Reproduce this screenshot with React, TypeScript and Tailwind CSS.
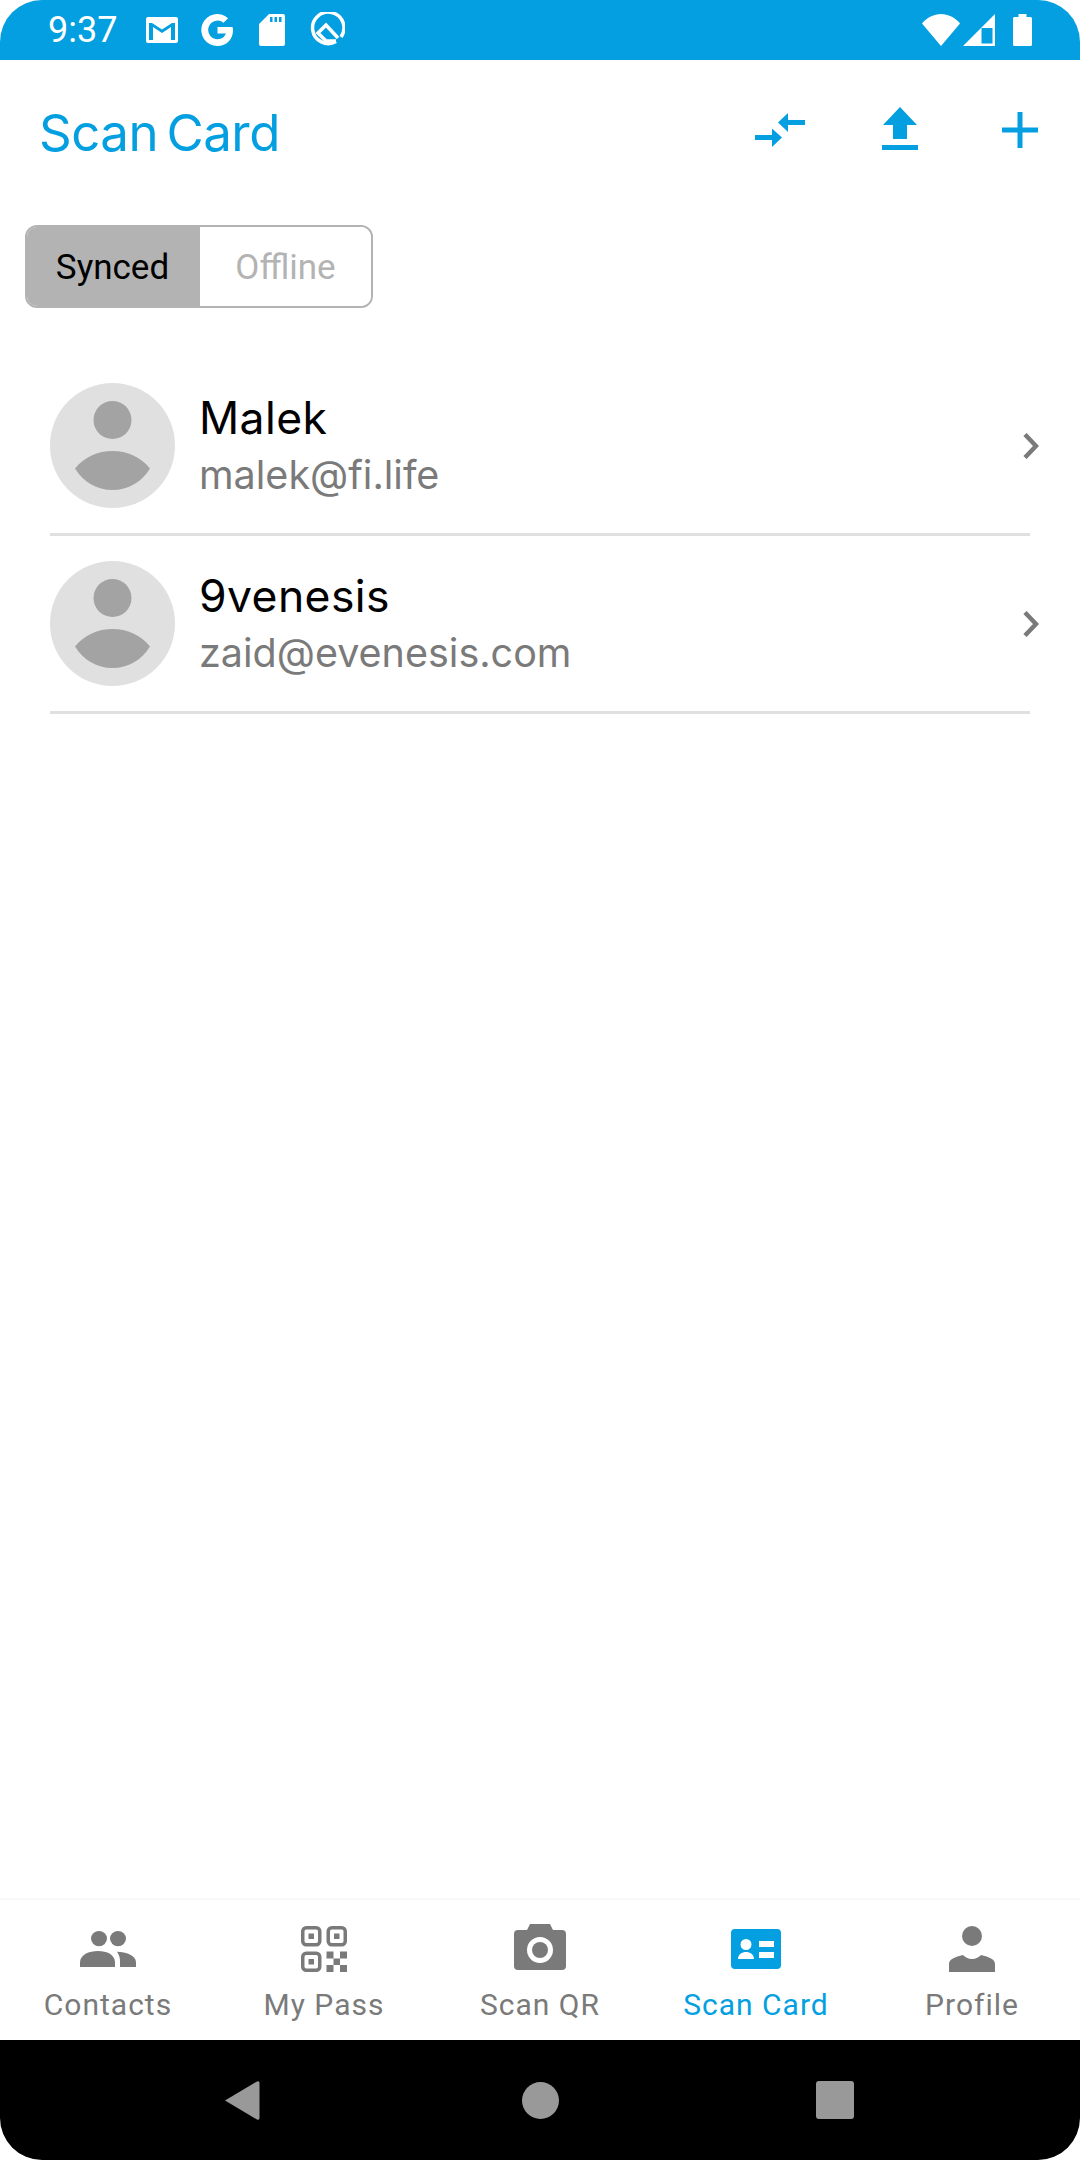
import React from "react";

const BLUE = "#039fe0";
const GRAY = "#7a7a7a";

function Chevron() {
  return (
    <svg width="16" height="26" viewBox="0 0 16 26" className="shrink-0">
      <path d="M2 1.5 L13 13 L2 24.5" fill="none" stroke={GRAY} strokeWidth="4.5" />
    </svg>
  );
}

function Avatar() {
  return (
    <svg width="125" height="125" viewBox="0 0 125 125" className="shrink-0">
      <circle cx="62.5" cy="62.5" r="62.5" fill="#e0e0e0" />
      <circle cx="62.5" cy="37" r="19" fill="#a3a3a3" />
      <path d="M25 85.5 C34 74 48 68 62.5 68 C77 68 91 74 100 85.5 C92 99 78 107 62.5 107 C47 107 33 99 25 85.5 Z" fill="#a3a3a3" />
    </svg>
  );
}

function Row({ name, email }: { name: string; email: string }) {
  return (
    <div className="h-[178px] flex flex-col">
      <div className="flex items-center h-[175px] pl-[50px] pr-[41px] pt-[25px] pb-[25px] shrink-0">
        <Avatar />
        <div className="ml-[24px] flex-1 flex flex-col font-['Inter',sans-serif]">
          <div className="text-[44.5px] leading-[50px] tracking-[0.4px] text-black">{name}</div>
          <div className="text-[39.5px] leading-[46px] text-[#7a7a7a] mt-[9px]">{email}</div>
        </div>
        <Chevron />
      </div>
      <div className="h-[3px] bg-[#e0e0e0] ml-[50px] mr-[50px] shrink-0" />
    </div>
  );
}

function Tab({ label, active, children }: { label: string; active?: boolean; children: React.ReactNode }) {
  return (
    <div className="flex-1 flex flex-col items-center">
      <div className="h-[50px] mt-[24px] flex items-center justify-center">{children}</div>
      <div className={"text-[30px] leading-[36px] mt-[13px] tracking-[1px] font-['Roboto',sans-serif] " + (active ? "text-[#039fe0]" : "text-[#7a7a7a]")}>{label}</div>
    </div>
  );
}

export default function App() {
  return (
    <div className="w-[1080px] h-[2160px] bg-white flex flex-col overflow-hidden">
      {/* status bar */}
      <div className="h-[60px] shrink-0 bg-[#039fe0] rounded-t-[42px] flex items-center pl-[48px] pr-[48px] text-white">
        <span className="text-[36px] leading-[60px] font-normal font-['Roboto',sans-serif] w-[67px]">9:37</span>
        {/* gmail */}
        <svg width="32" height="26" viewBox="0 0 32 26" className="ml-[31px]">
          <path fillRule="evenodd" d="M2 0H30a2 2 0 0 1 2 2V24a2 2 0 0 1-2 2H2a2 2 0 0 1-2-2V2a2 2 0 0 1 2-2Z M3 6V23H7V10L16 16L25 10V23H29V6H26L16 12.5L6 6Z" fill="#fff" />
        </svg>
        {/* G */}
        <svg width="32" height="32" viewBox="0 0 32 32" className="ml-[23px]">
          <path d="M31.5 13H16.5V19.5H24.8C23.8 23 20.6 25.2 16.5 25.2A9.3 9.3 0 1 1 22.5 8.8L27.1 4.2A16 16 0 1 0 16.5 32C25.5 32 32 25.5 32 16.3C32 15.1 31.8 14 31.5 13Z" fill="#fff" />
        </svg>
        {/* sd */}
        <svg width="26" height="32" viewBox="0 0 26 32" className="ml-[26px]">
          <path fillRule="evenodd" d="M10 0H24a2 2 0 0 1 2 2V30a2 2 0 0 1-2 2H2a2 2 0 0 1-2-2V10Z M11 3V8H13.5V3Z M15.5 3V8H18V3Z M20 3V8H22.5V3Z" fill="#fff" />
        </svg>
        {/* Q */}
        <svg width="36" height="36" viewBox="0 0 36 36" className="ml-[24px]">
          <path d="M27 29.5A15.7 15.7 0 1 1 32 25" fill="none" stroke="#fff" strokeWidth="3.5" />
          <path d="M29 26L17 13L9 21L17 29H27" fill="none" stroke="#fff" strokeWidth="3.5" />
        </svg>
        <div className="flex-1" />
        {/* wifi */}
        <svg width="38" height="32" viewBox="0 0 38 32">
          <path d="M0 9.5C5 3.5 12 0 19 0C26 0 33 3.5 38 9.5L19 32Z" fill="#fff" />
        </svg>
        {/* signal */}
        <svg width="32" height="32" viewBox="0 0 32 32" className="ml-[3px]">
          <path fillRule="evenodd" d="M32 0V32H0Z M29.5 14H18.5V29.5H29.5Z" fill="#fff" />
        </svg>
        {/* battery */}
        <svg width="19" height="32" viewBox="0 0 19 32" className="ml-[18px]">
          <path d="M5.5 0H13.5V3H17.5a1.5 1.5 0 0 1 1.5 1.5V30.5a1.5 1.5 0 0 1-1.5 1.5H1.5a1.5 1.5 0 0 1-1.5-1.5V4.5A1.5 1.5 0 0 1 1.5 3H5.5Z" fill="#fff" />
        </svg>
      </div>

      {/* header */}
      <div className="h-[143px] shrink-0 flex items-center pl-[39px] pr-[42px] pt-[2px]">
        <div className="flex-1 text-[51px] leading-[60px] font-['Inter',sans-serif] text-[#039fe0] tracking-[-0.5px] [word-spacing:-5.5px]">Scan Card</div>
        <div className="flex items-center mb-[6px]">
          <svg width="50" height="34" viewBox="0 0 50 34">
            <path d="M0 22H17V27H0Z M50 7H33V12H50Z" fill={BLUE} />
            <path d="M17 15.5L27 24.5L17 34Z M33 0L23 9.5L33 19Z" fill={BLUE} />
          </svg>
          <svg width="36" height="43" viewBox="0 0 36 43" className="ml-[77px] mb-[2px]">
            <path d="M18 0L35 18H25V32H11V18H1Z M0 38H36V43H0Z" fill={BLUE} />
          </svg>
          <svg width="36" height="36" viewBox="0 0 36 36" className="ml-[84px]">
            <path d="M15.5 0H20.5V15.5H36V20.5H20.5V36H15.5V20.5H0V15.5H15.5Z" fill={BLUE} />
          </svg>
        </div>
      </div>

      {/* segment */}
      <div className="pl-[25px] pt-[22px] shrink-0">
        <div className="flex w-[348px] h-[83px] border-2 border-[#b3b3b3] rounded-[12px] overflow-hidden font-['Roboto',sans-serif] text-[35px]">
          <div className="w-[173px] bg-[#b3b3b3] text-black flex items-center justify-center pt-[3px] pr-[2px]">Synced</div>
          <div className="flex-1 bg-white text-[#b3b3b3] flex items-center justify-center pt-[3px]">Offline</div>
        </div>
      </div>

      {/* list */}
      <div className="mt-[50px] shrink-0">
        <Row name="Malek" email="malek@fi.life" />
        <Row name="9venesis" email="zaid@evenesis.com" />
      </div>

      <div className="flex-1" />

      {/* tabs */}
      <div className="h-[142px] shrink-0 border-t-2 border-[#f8f8f8] flex bg-white">
        <Tab label="Contacts">
          <svg width="56" height="36" viewBox="0 0 56 38" preserveAspectRatio="none">
            <circle cx="19" cy="8" r="8" fill={GRAY} />
            <circle cx="38" cy="8" r="8" fill={GRAY} />
            <path d="M0 38V33C0 25 9 21 18 21C27 21 35 25 35 33V38Z" fill={GRAY} />
            <path d="M37 22C46 22 56 26 56 33V38H40V32C40 28 39 25 37 22Z" fill={GRAY} />
          </svg>
        </Tab>
        <Tab label="My Pass">
          <svg width="46" height="46" viewBox="0 0 46 46">
            <g fill="none" stroke={GRAY} strokeWidth="3.5">
              <rect x="1.75" y="1.75" width="17" height="17" rx="3.5" />
              <rect x="27.25" y="1.75" width="17" height="17" rx="3.5" />
              <rect x="1.75" y="27.25" width="17" height="17" rx="3.5" />
            </g>
            <g fill={GRAY}>
              <rect x="7.5" y="7.5" width="5.5" height="5.5" />
              <rect x="33" y="7.5" width="5.5" height="5.5" />
              <rect x="7.5" y="33" width="5.5" height="5.5" />
              <rect x="25.5" y="25.5" width="7" height="7" />
              <rect x="39" y="25.5" width="7" height="7" />
              <rect x="32.5" y="32.5" width="6.5" height="6.5" />
              <rect x="25.5" y="39" width="7" height="7" />
              <rect x="39" y="39" width="7" height="7" />
            </g>
          </svg>
        </Tab>
        <Tab label="Scan QR">
          <svg width="52" height="46" viewBox="0 0 52 46" className="mb-[4px]">
            <path fillRule="evenodd" d="M16 0H36L39 6H48a4 4 0 0 1 4 4V42a4 4 0 0 1-4 4H4a4 4 0 0 1-4-4V10a4 4 0 0 1 4-4H13Z M26 13a13 13 0 1 0 0 26a13 13 0 1 0 0-26Z" fill={GRAY} />
            <circle cx="26" cy="26" r="8" fill={GRAY} />
          </svg>
        </Tab>
        <Tab label="Scan Card" active>
          <svg width="50" height="40" viewBox="0 0 50 40">
            <path fillRule="evenodd" d="M4 0H46a4 4 0 0 1 4 4V36a4 4 0 0 1-4 4H4a4 4 0 0 1-4-4V4a4 4 0 0 1 4-4Z M15 10a5.5 5.5 0 1 0 0 11a5.5 5.5 0 1 0 0-11Z M7 30H23C23 25.5 19 23 15 23C11 23 7 25.5 7 30Z M28 12V18H43V12Z M28 23V29H43V23Z" fill={BLUE} />
          </svg>
        </Tab>
        <Tab label="Profile">
          <svg width="46" height="46" viewBox="0 0 46 46">
            <circle cx="23" cy="10" r="10" fill={GRAY} />
            <path d="M0 46V38C0 33 6 31 14 29C16 31 19 33 23 33C27 33 30 31 32 29C40 31 46 33 46 38V46Z" fill={GRAY} />
          </svg>
        </Tab>
      </div>

      {/* nav */}
      <div className="h-[120px] shrink-0 bg-black rounded-b-[42px] flex items-center pl-[224px]">
        <svg width="36" height="41" viewBox="0 0 36 41">
          <path d="M1 20.5L33 1.5Q35.5 0.5 35.5 3V38Q35.5 40.5 33 39.5Z" fill="#999" />
        </svg>
        <div className="w-[37px] h-[37px] rounded-full bg-[#999] ml-[262px]" />
        <div className="w-[38px] h-[38px] rounded-[3px] bg-[#999] ml-[257px]" />
      </div>
    </div>
  );
}
